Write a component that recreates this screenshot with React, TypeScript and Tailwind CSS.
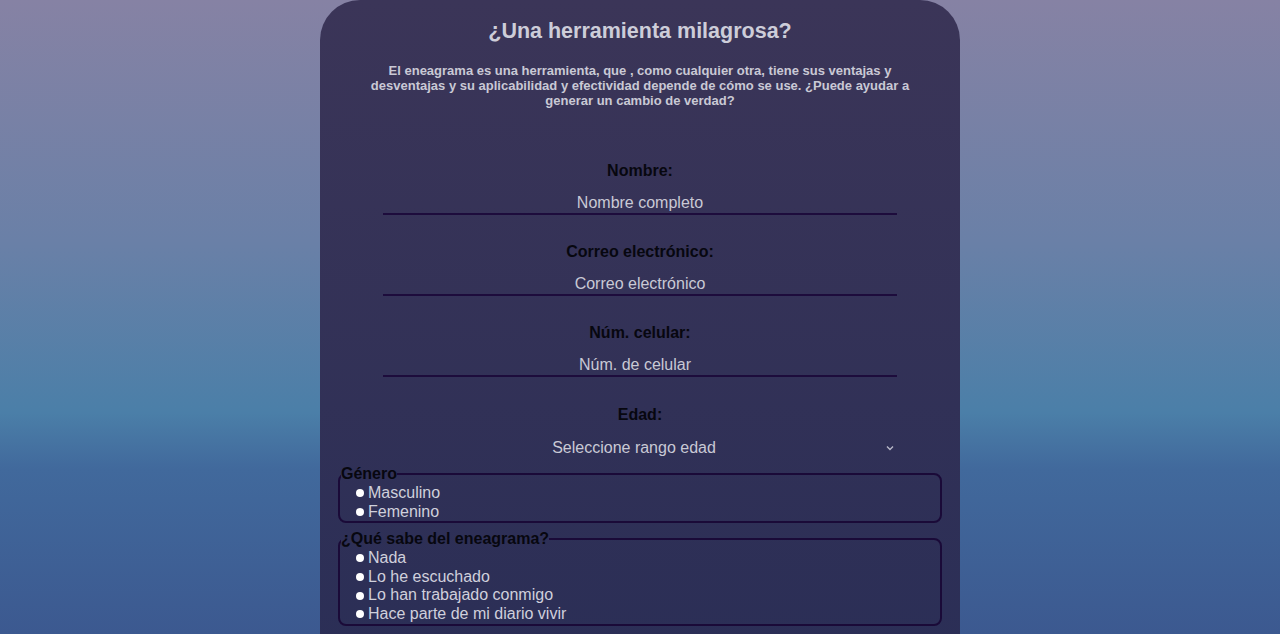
import React from 'react';

const font = { fontFamily: '"Liberation Sans", Arial, sans-serif' };

const fields = [
  { label: 'Nombre:', placeholder: 'Nombre completo', pad: '' },
  { label: 'Correo electrónico:', placeholder: 'Correo electrónico', pad: '' },
  { label: 'Núm. celular:', placeholder: 'Núm. de celular', pad: 'pr-[10px]' },
];

export default function App() {
  return (
    <div
      className="h-screen overflow-hidden bg-[linear-gradient(180deg,#8682a4_0%,#6a80a7_38%,#4b7fa8_65%,#41699c_74%,#3c5990_100%)]"
      style={font}
    >
      <div className="mx-auto w-[640px] rounded-t-[40px] bg-gradient-to-b from-[#3b3558] to-[#2a2e56] pt-[19px] pb-16">
        {/* Heading */}
        <h2 className="text-center text-[21.5px] leading-6 font-bold text-[#cdcdd9]">¿Una herramienta milagrosa?</h2>
        <p className="mx-auto mt-[20px] w-[550px] text-center text-[13px] leading-[15px] font-bold text-[#c9c9d5]">
          El eneagrama es una herramienta, que , como cualquier otra, tiene sus ventajas y desventajas y su aplicabilidad y
          efectividad depende de cómo se use. ¿Puede ayudar a generar un cambio de verdad?
        </p>

        {/* Text fields */}
        <div className="mt-[54px] flex flex-col gap-[28px]">
          {fields.map((f) => (
            <div key={f.label} className="flex flex-col items-center">
              <label className="text-[16px] leading-[18px] font-bold text-[#07070f]">{f.label}</label>
              <div
                className={`mt-[8px] w-[514px] border-b-2 border-[#1d0c3c] pt-[6px] pb-[1px] text-center text-[16px] leading-[18px] text-[#c9c9d5] ${f.pad}`}
              >
                {f.placeholder}
              </div>
            </div>
          ))}

          {/* Age select */}
          <div className="mt-[1px] flex flex-col items-center">
            <label className="text-[16px] leading-[18px] font-bold text-[#07070f]">Edad:</label>
            <div className="mt-[8px] flex w-[514px] items-center pt-[7px] pb-[3px]">
              <span className="flex-1 text-center text-[16px] leading-[18px] text-[#c9c9d5]">Seleccione rango edad</span>
              <svg width="10" height="6" viewBox="0 0 10 6" className="mr-[2px]">
                <path d="M2 1.5 L5 4.5 L8 1.5" fill="none" stroke="#b8b8c8" strokeWidth="1.4" />
              </svg>
            </div>
          </div>
        </div>

        {/* Radio groups */}
        <RadioGroup className="mt-[5px]" legend="Género" options={['Masculino', 'Femenino']} />
        <RadioGroup
          className="mt-[7px]"
          legend="¿Qué sabe del eneagrama?"
          options={['Nada', 'Lo he escuchado', 'Lo han trabajado conmigo', 'Hace parte de mi diario vivir']}
        />
      </div>
    </div>
  );
}

function RadioGroup({ legend, options, className }: { legend: string; options: string[]; className?: string }) {
  return (
    <fieldset className={`mx-[18px] rounded-[8px] border-2 border-[#1a0a38] px-[16px] pt-[1px] ${className ?? ''}`}>
      <legend className="-ml-[15px] text-[16px] leading-[18px] font-bold text-[#07070f]">{legend}</legend>
      {options.map((o) => (
        <div key={o} className="flex items-center gap-[4px] text-[16px] leading-[18.6px] text-[#d0d0dc]">
          <span className="h-2 w-2 rounded-full bg-white" />
          {o}
        </div>
      ))}
    </fieldset>
  );
}
